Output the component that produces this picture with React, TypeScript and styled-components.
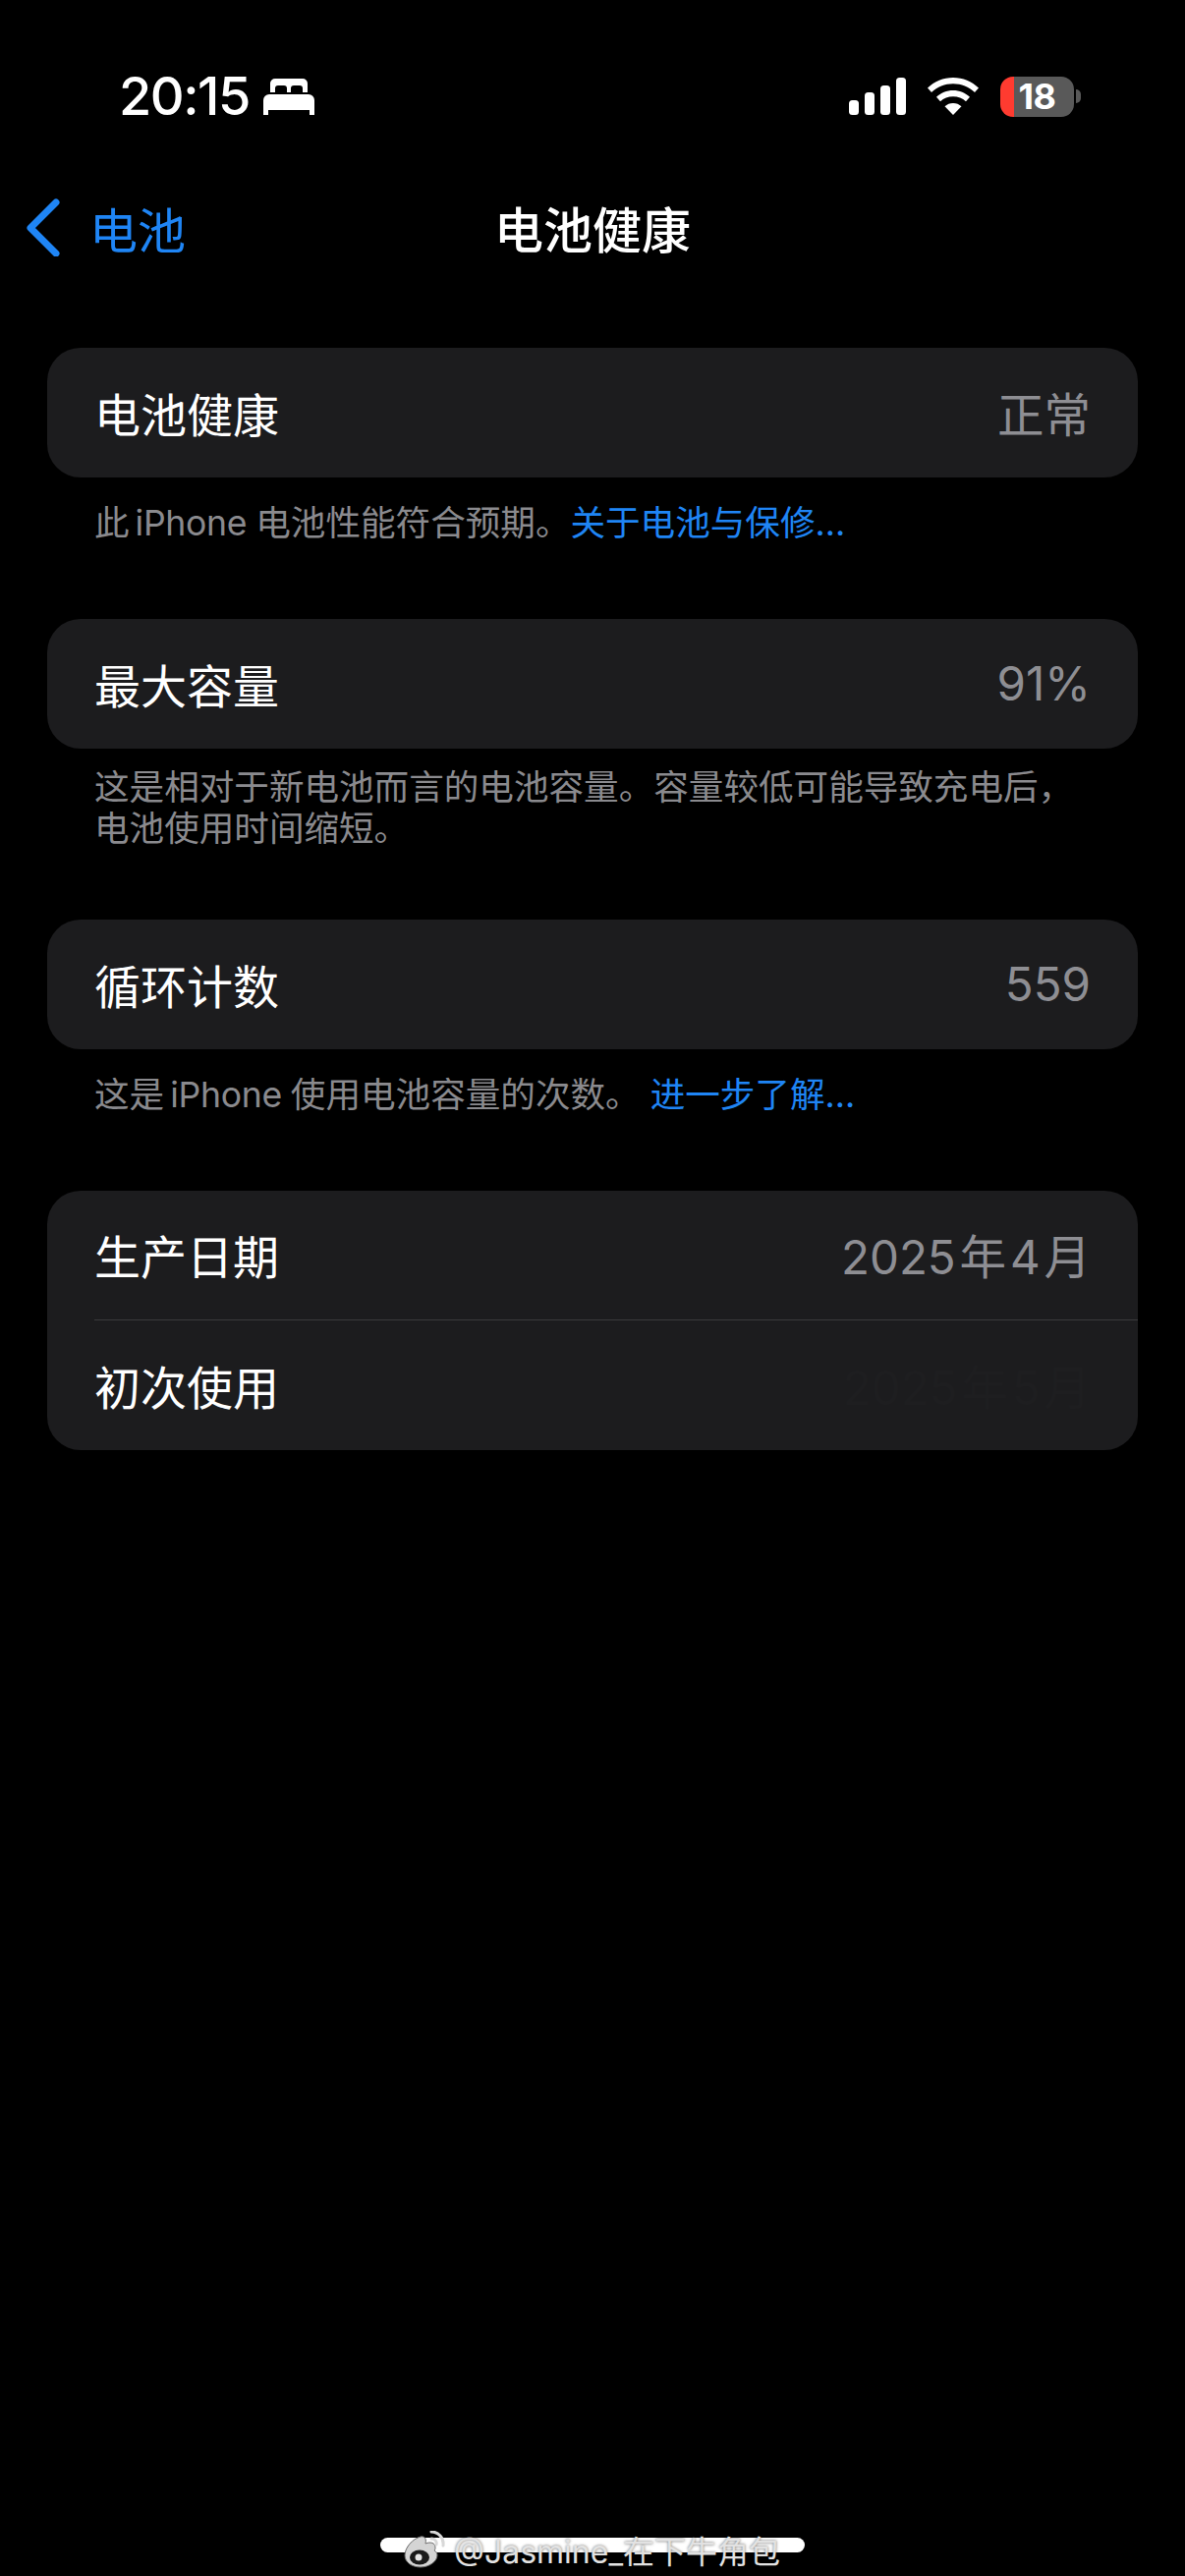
import React from 'react';
import styled, { createGlobalStyle } from 'styled-components';

const GlobalStyle = createGlobalStyle`
  html, body {
    margin: 0;
    padding: 0;
    background: #000;
  }
`;

const FONT = `Inter, "Noto Sans CJK SC", "Noto Sans", sans-serif`;

const Page = styled.div`
  width: 1206px;
  height: 2622px;
  background: #000;
  color: #fff;
  font-family: ${FONT};
  display: flex;
  flex-direction: column;
  overflow: hidden;
  position: relative;
`;

const StatusBar = styled.div`
  height: 118px;
  padding: 73px 106px 0 121px;
  box-sizing: border-box;
  display: flex;
  align-items: flex-start;
  justify-content: space-between;
`;

const TimeGroup = styled.div`
  display: flex;
  align-items: center;
  gap: 14px;
  height: 50px;
`;

const Time = styled.span`
  font-size: 54px;
  font-weight: 500;
  letter-spacing: -1.5px;
  line-height: 50px;
`;

const StatusIcons = styled.div`
  display: flex;
  align-items: center;
  gap: 22px;
  height: 50px;
`;

const Battery = styled.div`
  width: 75px;
  height: 41px;
  border-radius: 13px;
  background: linear-gradient(to right, #ff3b30 0 14px, #595959 14px);
  display: flex;
  align-items: center;
  justify-content: center;
  position: relative;
  margin-right: 7px;
  &::after {
    content: '';
    position: absolute;
    right: -7px;
    top: 13px;
    width: 5px;
    height: 14px;
    border-radius: 0 7px 7px 0;
    background: #595959;
  }
`;

const BatteryLevel = styled.span`
  font-size: 36px;
  font-weight: 700;
  line-height: 41px;
  letter-spacing: -0.5px;
`;

const NavBar = styled.div`
  height: 118px;
  margin-top: 54px;
  padding-left: 26px;
  display: flex;
  align-items: center;
  position: relative;
`;

const BackLabel = styled.span`
  font-size: 49px;
  color: #1f85f5;
  margin-left: 29px;
`;

const NavTitle = styled.h1`
  position: absolute;
  left: 0;
  right: 0;
  top: 0;
  bottom: 0;
  margin: 0;
  font-size: 50px;
  font-weight: 500;
  display: flex;
  align-items: center;
  justify-content: center;
`;

const Content = styled.div`
  padding: 64px 48px 0;
  display: flex;
  flex-direction: column;
`;

const Section = styled.section<{ $gap: number }>`
  margin-bottom: ${props => props.$gap}px;
`;

const Card = styled.div`
  background: #1c1c1e;
  border-radius: 34px;
  overflow: hidden;
`;

const Row = styled.div<{ $divider?: boolean }>`
  height: 132px;
  margin-left: 48px;
  padding: 0 48px 2px 0;
  box-sizing: border-box;
  display: flex;
  align-items: center;
  justify-content: space-between;
  border-bottom: ${props => (props.$divider ? '1px solid #3a3a3c' : 'none')};
`;

const Label = styled.span`
  font-size: 47px;
  color: #fff;
`;

const Value = styled.span<{ $hidden?: boolean }>`
  font-size: 47.5px;
  word-spacing: -9.5px;
  color: ${props => (props.$hidden ? '#1e1e20' : '#8e8e93')};
`;

const Footnote = styled.p<{ $top: number }>`
  margin: ${props => props.$top}px 0 0;
  padding: 0 48px;
  font-size: 35.6px;
  line-height: 42px;
  color: #8a8a8e;
  text-autospace: no-autospace;
`;

const Latin = styled.span`
  margin: 0 9px 0 6px;
  letter-spacing: -0.3px;
`;

const FootLink = styled.span`
  color: #1f85f5;
`;

const HomeArea = styled.div`
  margin-top: auto;
  height: 60px;
  position: relative;
`;

const HomeBar = styled.div`
  position: absolute;
  left: 387px;
  top: 21px;
  width: 432px;
  height: 15px;
  border-radius: 8px;
  background: #fff;
`;

const Watermark = styled.div`
  position: absolute;
  left: 410px;
  top: 2px;
  display: flex;
  align-items: center;
  gap: 9px;
  height: 62px;
  font-size: 32px;
  color: #e2e2e2;
  text-shadow: 0 0 3px rgba(0, 0, 0, 0.6);
`;

const BackChevron = () => (
  <svg width="36" height="60" viewBox="0 0 36 60">
    <path d="M31 5 L5 31 L31 57" fill="none" stroke="#1f85f5" strokeWidth="7" strokeLinecap="round" strokeLinejoin="round" />
  </svg>
);

const BedIcon = () => (
  <svg width="52" height="37" viewBox="0 0 52 37" fill="#fff">
    <path d="M7 5a5 5 0 0 1 5-5h28a5 5 0 0 1 5 5v9h-5v-4a3 3 0 0 0-3-3h-6a3 3 0 0 0-3 3v4h-4v-4a3 3 0 0 0-3-3h-6a3 3 0 0 0-3 3v4H7z" />
    <path d="M6 16h40a6 6 0 0 1 6 6v15h-5v-5H5v5H0V22a6 6 0 0 1 6-6z" />
  </svg>
);

const SignalIcon = () => (
  <svg width="58" height="38" viewBox="0 0 58 38" fill="#fff">
    <rect x="0" y="23" width="10" height="15" rx="3.5" />
    <rect x="16" y="15" width="10" height="23" rx="3.5" />
    <rect x="32" y="8" width="10" height="30" rx="3.5" />
    <rect x="48" y="0" width="10" height="38" rx="3.5" />
  </svg>
);

const WifiIcon = () => (
  <svg width="52" height="38" viewBox="0 0 52 38" fill="#fff">
    <path d="M26 0c10 0 19 4 26 10.500l-4 4.500C42 9.500 34.500 6.300 26 6.300S10 9.500 4 15L0 10.500C7 4 16 0 26 0z" />
    <path d="M26 13c6.500 0 12.500 2.500 17 6.800l-4 4.400C35.500 21 31 19.200 26 19.200s-9.500 1.800-13 5L9 19.800C13.500 15.500 19.500 13 26 13z" />
    <path d="M26 26c3.200 0 6.200 1.200 8.500 3.300L26 38l-8.500-8.700C19.800 27.200 22.800 26 26 26z" />
  </svg>
);

const WeiboIcon = () => (
  <svg width="43" height="38" viewBox="0 0 43 38">
    <path d="M2 25C2 17 10 8 18 6c5-1 6 3 5 7 5-2 10-1 10 4 0 1 0 2-1 3 2 1 3 3 3 5 0 6-8 12-17 12S2 32 2 25z" fill="#d4d4d4" stroke="#6b6b6b" strokeWidth="1" />
    <ellipse cx="17" cy="27" rx="10" ry="7.500" fill="#1a1a1a" />
    <circle cx="16" cy="27" r="3.500" fill="#e6e6e6" />
    <path d="M29 1c7 0 13 6 12 14M29 8c3.500 0 6 3 5 6" fill="none" stroke="#d8d8d8" strokeWidth="3" strokeLinecap="round" />
  </svg>
);

const App: React.FC = () => (
  <Page>
    <GlobalStyle />
    <StatusBar>
      <TimeGroup>
        <Time>20:15</Time>
        <BedIcon />
      </TimeGroup>
      <StatusIcons>
        <SignalIcon />
        <WifiIcon />
        <Battery>
          <BatteryLevel>18</BatteryLevel>
        </Battery>
      </StatusIcons>
    </StatusBar>

    <NavBar>
      <NavTitle>电池健康</NavTitle>
      <BackChevron />
      <BackLabel>电池</BackLabel>
    </NavBar>

    <Content>
      <Section $gap={76}>
        <Card>
          <Row>
            <Label>电池健康</Label>
            <Value>正常</Value>
          </Row>
        </Card>
        <Footnote $top={26}>
          此<Latin>iPhone</Latin>电池性能符合预期。<FootLink>关于电池与保修...</FootLink>
        </Footnote>
      </Section>

      <Section $gap={71}>
        <Card>
          <Row>
            <Label>最大容量</Label>
            <Value>91%</Value>
          </Row>
        </Card>
        <Footnote $top={19}>
          这是相对于新电池而言的电池容量。容量较低可能导致充电后，
          <br />
          电池使用时间缩短。
        </Footnote>
      </Section>

      <Section $gap={76}>
        <Card>
          <Row>
            <Label>循环计数</Label>
            <Value>559</Value>
          </Row>
        </Card>
        <Footnote $top={26}>
          这是<Latin>iPhone</Latin>使用电池容量的次数。 <FootLink>进一步了解...</FootLink>
        </Footnote>
      </Section>

      <Section $gap={0}>
        <Card>
          <Row $divider>
            <Label>生产日期</Label>
            <Value>2025 年 4 月</Value>
          </Row>
          <Row>
            <Label>初次使用</Label>
            <Value $hidden>2025 年 5 月</Value>
          </Row>
        </Card>
      </Section>
    </Content>

    <HomeArea>
      <HomeBar />
      <Watermark>
        <WeiboIcon />
        <span>@Jasmine_在下牛角包</span>
      </Watermark>
    </HomeArea>
  </Page>
);

export default App;
